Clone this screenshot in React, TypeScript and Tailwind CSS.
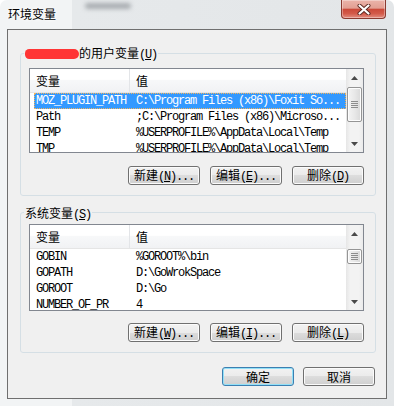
import React from "react";

const cjk = "font-['Noto_Sans_CJK_SC',sans-serif]";
const mono = "font-['Liberation_Mono',monospace] text-[12px] tracking-[-1.2px]";

function Acc({ zh, k, dots }: { zh: string; k: string; dots?: boolean }) {
  return (
    <span className="inline-flex items-baseline whitespace-pre">
      <span className={`${cjk} text-[12px]`}>{zh}</span>
      <span className={mono}>
        (<span className="underline underline-offset-1">{k}</span>){dots ? "..." : ""}
      </span>
    </span>
  );
}

function Btn({ children, def }: { children: React.ReactNode; def?: boolean }) {
  return (
    <div
      className={`w-[72px] h-[19px] rounded-[3px] border ${
        def
          ? "border-[#3c7fb1] shadow-[inset_0_0_0_1px_#92e0f7]"
          : "border-[#707070] shadow-[inset_0_0_0_1px_#fbfbfb]"
      } bg-[linear-gradient(#f2f2f2_0%,#ebebeb_50%,#dddddd_50%,#cfcfcf_100%)] flex items-center justify-center text-black leading-none`}
    >
      {children}
    </div>
  );
}

function Arrow({ down }: { down?: boolean }) {
  return (
    <div className="h-[17px] flex items-center justify-center">
      <svg width="7" height="4" viewBox="0 0 7 4">
        {down ? (
          <path d="M0 0 L7 0 L3.5 4 Z" fill="#4a4a4a" />
        ) : (
          <path d="M3.5 0 L7 4 L0 4 Z" fill="#4a4a4a" />
        )}
      </svg>
    </div>
  );
}

type Row = { n: string; v: string; sel?: boolean };

function ListBox({ rows, hCls, thumbCls }: { rows: Row[]; hCls: string; thumbCls: string }) {
  return (
    <div className={`ml-[8px] w-[335px] ${hCls} border border-[#828790] bg-white flex overflow-hidden`}>
      <div className="flex-1 flex flex-col overflow-hidden">
        <div className="h-[24px] shrink-0 flex border-b border-[#e5e5e5] bg-[linear-gradient(#ffffff_0%,#ffffff_45%,#f7f8f9_50%,#f1f2f4_100%)]">
          <div className={`w-[100px] pl-[6px] border-r border-[#e3e5e8] flex items-center text-[12px] ${cjk} text-black`}>
            变量
          </div>
          <div className={`pl-[6px] flex items-center text-[12px] ${cjk} text-black`}>值</div>
        </div>
        {rows.map((r) => (
          <div
            key={r.n}
            className={`ml-[4px] h-[16px] shrink-0 flex items-center whitespace-pre ${mono} ${
              r.sel
                ? "bg-[#3399ff] text-white outline outline-1 outline-dotted outline-[#f3b35a] -outline-offset-1"
                : "text-black"
            }`}
          >
            <div className="w-[100px] pl-[2px] overflow-hidden">{r.n}</div>
            <div className="pl-[2px] flex-1 overflow-hidden">{r.v}</div>
          </div>
        ))}
      </div>
      <div className="w-[17px] shrink-0 flex flex-col bg-[linear-gradient(to_right,#e6e6e6,#f3f3f3_25%,#f3f3f3_75%,#ebebeb)]">
        <Arrow />
        <div className="flex-1">
          <div
            className={`${thumbCls} mx-[1px] rounded-[2px] border border-[#959595] bg-[linear-gradient(to_right,#f4f4f4,#e8e8e8_50%,#d9d9d9)] shadow-[inset_0_0_0_1px_#fdfdfd] flex flex-col items-center justify-center gap-[1px]`}
          >
            <div className="w-[7px] h-[1px] bg-[#8d8d8d]" />
            <div className="w-[7px] h-[1px] bg-[#8d8d8d]" />
            <div className="w-[7px] h-[1px] bg-[#8d8d8d]" />
            <div className="w-[7px] h-[1px] bg-[#8d8d8d]" />
          </div>
        </div>
        <Arrow down />
      </div>
    </div>
  );
}

export default function App() {
  const userRows: Row[] = [
    { n: "MOZ_PLUGIN_PATH", v: "C:\\Program Files (x86)\\Foxit So...", sel: true },
    { n: "Path", v: ";C:\\Program Files (x86)\\Microso..." },
    { n: "TEMP", v: "%USERPROFILE%\\AppData\\Local\\Temp" },
    { n: "TMP", v: "%USERPROFILE%\\AppData\\Local\\Temp" },
  ];
  const sysRows: Row[] = [
    { n: "GOBIN", v: "%GOROOT%\\bin" },
    { n: "GOPATH", v: "D:\\GoWrokSpace" },
    { n: "GOROOT", v: "D:\\Go" },
    { n: "NUMBER_OF_PR", v: "4" },
  ];
  return (
    <div className="w-[394px] h-[406px] flex flex-col overflow-hidden rounded-t-[7px] bg-[linear-gradient(to_right,#f2f4f5_0px,#f2f4f5_72px,#e6e9eb_72px,#e3e6e8_100%)]">
      <div className="h-[29px] shrink-0 flex items-start">
        <div
          className={`pl-[8px] pt-[8px] text-[12px] leading-[12px] text-black ${cjk} [text-shadow:0_0_5px_#fff,0_0_3px_#fff]`}
        >
          环境变量
        </div>
        <div className="ml-[29px] mt-[3px] w-[46px] h-[6px] rounded-full bg-[#a9adb1] blur-[2px]" />
        <div className="ml-auto mr-[8px] w-[45px] h-[19px] rounded-b-[4px] border border-t-0 border-[#8a3a30] bg-[linear-gradient(#ebb4aa_0%,#e29f93_45%,#cb4a3a_52%,#d35a49_75%,#e38d80_100%)] shadow-[inset_0_0_0_1px_rgba(255,255,255,0.35)] flex items-center justify-center">
          <svg width="14" height="11" viewBox="0 0 14 11">
            <path d="M2.5 1.5 L11.5 9.5 M11.5 1.5 L2.5 9.5" stroke="#5b2720" strokeWidth="4" strokeLinecap="round" />
            <path d="M2.5 1.5 L11.5 9.5 M11.5 1.5 L2.5 9.5" stroke="#ffffff" strokeWidth="2.2" strokeLinecap="round" />
          </svg>
        </div>
      </div>
      <div className="ml-[7px] w-[380px] h-[370px] shrink-0 border border-[#6f6f6f] bg-[#f0f0f0] flex flex-col">
        <fieldset className="ml-[12px] mt-[17px] w-[356px] border border-[#d5dfe5] rounded-[3px] px-0 pt-[9px] pb-[10px]">
          <legend className="ml-[3px] px-[1px] h-[12px] leading-[12px] text-black">
            <span className="inline-flex items-center h-[12px]">
              <span className="inline-block w-[54px] h-[10px] rounded-l-[5px] rounded-r-[6px] bg-[#ff3535]" />
              <Acc zh="的用户变量" k="U" />
            </span>
          </legend>
          <ListBox rows={userRows} hCls="h-[85px]" thumbCls="mt-[1px] h-[35px]" />
          <div className="ml-[8px] w-[335px] mt-[13px] flex justify-end gap-[10px]">
            <Btn>
              <Acc zh="新建" k="N" dots />
            </Btn>
            <Btn>
              <Acc zh="编辑" k="E" dots />
            </Btn>
            <Btn>
              <Acc zh="删除" k="D" />
            </Btn>
          </div>
        </fieldset>
        <fieldset className="ml-[12px] mt-[10px] w-[356px] border border-[#d5dfe5] rounded-[3px] px-0 pt-[6px] pb-[10px]">
          <legend className="ml-[3px] px-[1px] h-[12px] leading-[12px] text-black">
            <span className="inline-flex items-center h-[12px]">
              <Acc zh="系统变量" k="S" />
            </span>
          </legend>
          <ListBox rows={sysRows} hCls="h-[87px]" thumbCls="mt-[7px] h-[15px]" />
          <div className="ml-[8px] w-[335px] mt-[12px] flex justify-end gap-[10px]">
            <Btn>
              <Acc zh="新建" k="W" dots />
            </Btn>
            <Btn>
              <Acc zh="编辑" k="I" dots />
            </Btn>
            <Btn>
              <Acc zh="删除" k="L" />
            </Btn>
          </div>
        </fieldset>
        <div className="mt-[14px] pr-[11px] flex justify-end gap-[9px]">
          <Btn def>
            <span className={`${cjk} text-[12px]`}>确定</span>
          </Btn>
          <Btn>
            <span className={`${cjk} text-[12px]`}>取消</span>
          </Btn>
        </div>
      </div>
    </div>
  );
}
